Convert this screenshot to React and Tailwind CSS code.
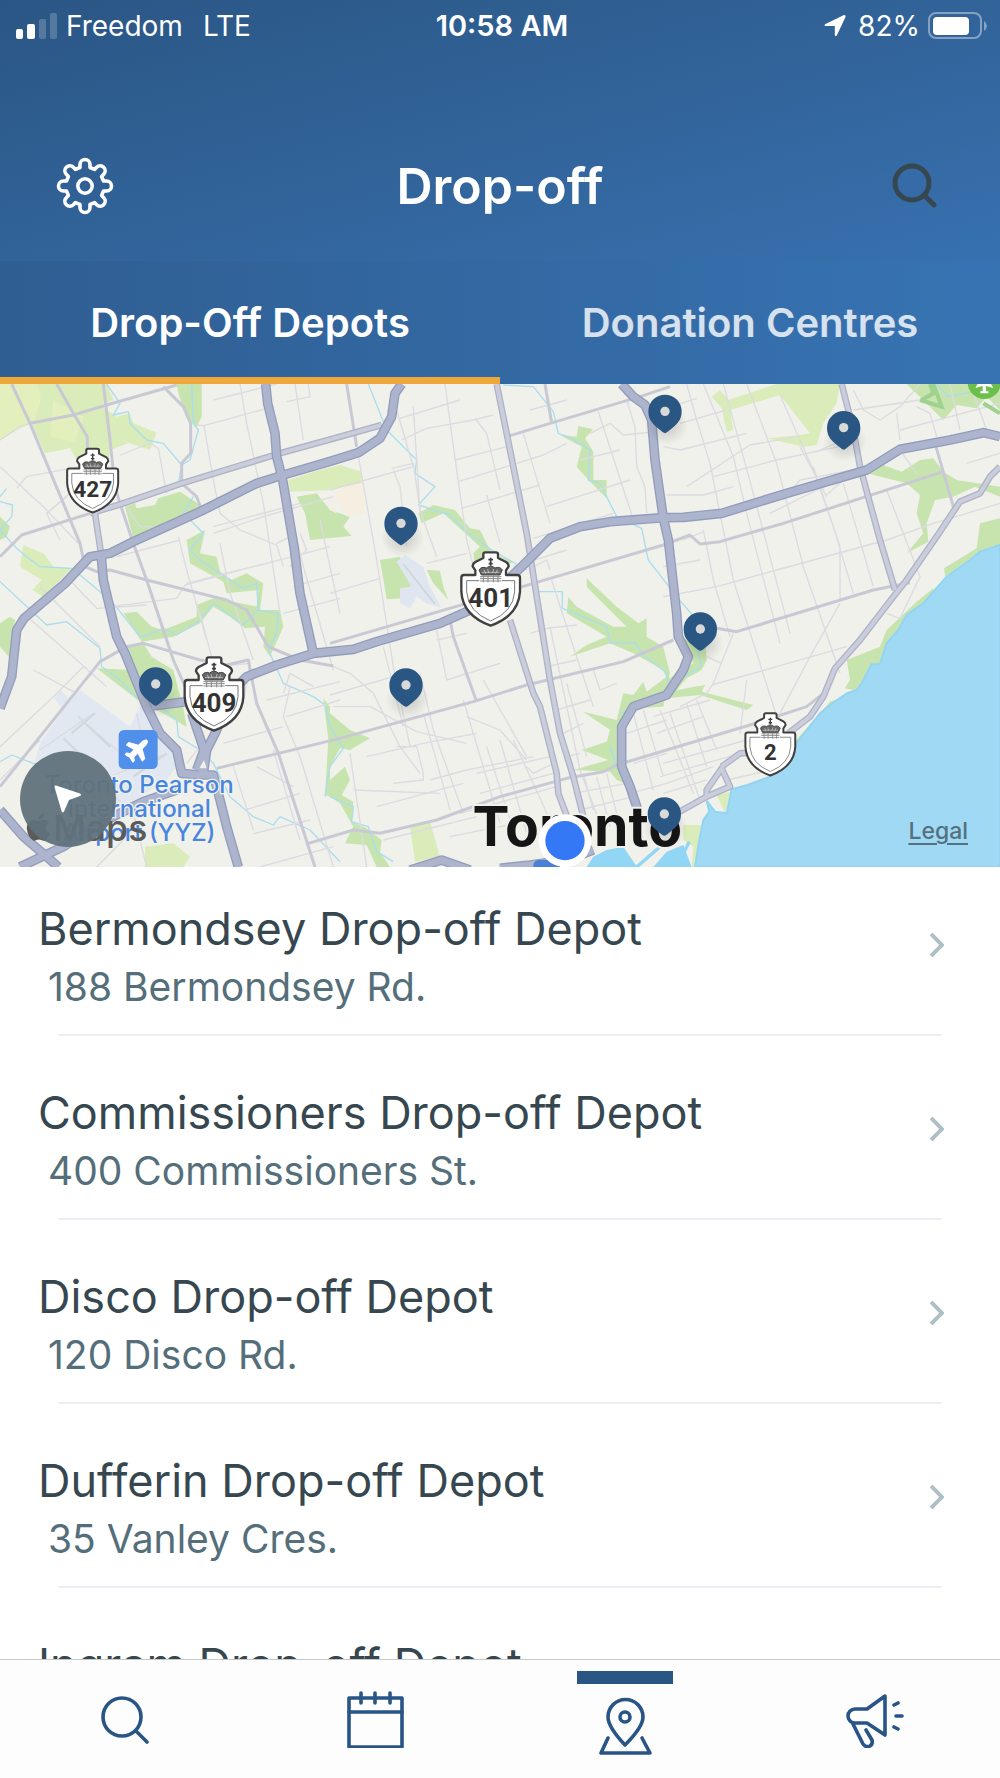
import { FaApple, FaPlane } from "react-icons/fa";

const depots = [
  { name: "Bermondsey Drop-off Depot", address: "188 Bermondsey Rd." },
  { name: "Commissioners Drop-off Depot", address: "400 Commissioners St." },
  { name: "Disco Drop-off Depot", address: "120 Disco Rd." },
  { name: "Dufferin Drop-off Depot", address: "35 Vanley Cres." },
  { name: "Ingram Drop-off Depot" }
];

const pins = [
  [467, 912],
  [1203, 430],
  [1218, 915],
  [1995, 94],
  [2531, 143],
  [2101, 747],
  [1993, 1302]
];

const lightParks = [
  "M0 12H110L122 45L105 125L60 145L30 148L0 182Z",
  "M100 12H320L340 60L300 75L350 110L390 100L400 130L470 158L450 210L360 180L385 190L330 210L325 250L235 245L210 205L135 220L95 130L122 60Z",
  "M70 495L130 520L160 560L215 565L130 650L97 630L125 600L60 560Z",
  "M865 300L960 270L1020 255L1085 275V310L1000 330L870 335Z",
  "M1230 1340L1290 1325L1320 1430L1245 1445Z",
  "M435 1400L520 1390L570 1430L550 1461H435Z",
  "M2135 50L2160 30L2185 60L2330 12H2520L2510 70L2470 130L2450 195L2410 200L2300 175L2400 165L2430 160L2340 45L2190 90L2200 150L2180 155L2165 85Z",
  "M2050 1335H2110L2090 1461H2075L2080 1400L2050 1380Z",
  "M2150 1245L2195 1235L2175 1300Z"
];

const parks = [
  "M530 12H605V110L590 140L560 115L535 40Z",
  "M375 380L405 370L410 385L465 375L475 355L540 335L600 375L590 395L400 475Z",
  "M0 410L30 440L20 470L0 480Z",
  "M0 730L30 710L45 720L30 835L0 800Z",
  "M560 480L615 450L600 520L650 530L660 575L695 600L740 580L790 610L780 690L840 690L850 740L810 830L790 800L795 740L735 745L690 710L640 680L600 730L520 770L425 785L370 700L410 695L455 740L490 750L590 710V675L640 655L700 665L770 680L775 630L680 640L670 605L570 550Z",
  "M380 800L430 790L455 830L520 870L550 985L560 1040L480 995L440 980L290 865L395 870Z",
  "M890 350L950 340L990 390L1050 410L1030 440L1055 468L930 480L915 400Z",
  "M1255 400L1300 375L1365 390L1410 445L1440 450L1475 520L1540 545L1480 580L1425 560L1420 520L1440 500L1330 400L1265 430Z",
  "M1140 540L1200 530L1235 610L1215 655L1160 658Z",
  "M1280 570L1320 572L1330 620L1345 660L1300 610Z",
  "M1680 165L1730 170L1735 138L1780 148L1755 175L1780 215V300L1820 300V355L1770 305L1730 260L1745 200Z",
  "M1760 595L1850 680L1915 730L1940 715V770L1990 800L2010 880L1990 980L1900 985L1865 1040V1160L1900 1220L1850 1200L1830 1175L1720 1170L1825 1140L1745 1110L1820 1085L1830 1050L1750 995L1850 1020L1870 940L1900 945L1930 905L1940 935L2000 890L1990 870L1900 820L1830 790L1710 830L1760 795L1820 770L1700 700L1705 650L1730 680L1840 740H1880L1760 620Z",
  "M990 1000L1050 1050L1110 1075L1050 1110L1020 1105L990 1160Z",
  "M990 1200L1035 1160L1050 1200L1025 1245L1060 1265L1055 1325L1100 1345L1145 1380L1140 1415L1170 1461H1130L1100 1395L1035 1390L1060 1340L1020 1270L990 1250Z",
  "M970 955L990 980V1250L975 1245L985 1080Z",
  "M2050 780L2115 770L2120 840L2105 870L2060 895L2030 930L2115 915L2105 935L2260 975L2240 990L2100 945L2000 955L1985 965L2000 900L2080 850Z",
  "M2600 280L2650 255L2705 275L2760 240L2800 235L2830 275L2870 300L3000 320V350L2925 320L2860 350L2805 360L2780 430L2785 485L2720 520L2770 460L2750 400L2760 345L2720 310Z",
  "M3000 415V500L2910 545L2835 590L2832 565L2930 505L2940 430Z",
  "M2800 625L2750 665L2660 750L2640 800L2540 840L2550 900L2535 925L2580 935L2660 850V800L2800 640Z",
  "M2540 945L2490 965L2380 1090V1110L2480 990Z",
  "M2720 12L2830 120L2870 75L2930 85L2960 50L3000 90V12Z"
];

const streams = [
  "M320 12L360 70L340 105L385 95L390 130L440 180L490 190L545 255L535 310M575 12L580 130L595 150L570 240L545 255",
  "M0 350L20 325M0 365L38 375L35 410L0 450L50 505L80 530L120 560L215 565L270 610L340 670L420 770L440 765L490 745L530 765L595 725L640 670L730 735L775 690L770 610L730 625L600 540L570 510L610 460L550 400L580 350",
  "M775 690L835 700L830 760L805 810L850 910L940 950L975 975L990 1040L1030 1105L990 1160L975 1250",
  "M0 605L140 735L200 725L300 805L305 860L360 900L410 955M470 970L530 1020L535 1070L600 1110L640 1150L690 1250L760 1310L820 1335L840 1310L930 1350L1020 1445",
  "M0 1145L35 1125L100 1150L140 1155",
  "M1105 12L1160 150L1250 240L1245 280L1305 320L1255 375L1350 405L1400 455L1475 510L1580 570M1615 635H1687V685L1820 740L1832 790L1905 788L1930 825L1995 875L2010 920",
  "M1510 15L1600 20L1660 95L1675 160L1715 175L1770 210L1765 300L1800 310L1850 410L1925 445L1945 540L2030 650L2090 720",
  "M990 1250L1060 1280L1055 1325L1105 1340L1130 1415L1180 1445",
  "M2810 12L2845 50L3000 20M2050 890L2105 860L2090 800M1860 1000L1885 990M1850 1160L1830 1100"
];

const localRoads = [
  "M0 180L60 140L90 130M140 400L210 340M0 260L130 380L235 490M50 325L80 290L240 260M170 12L220 100M360 225L450 190L475 205L500 340M365 360L420 440L480 440",
  "M590 135L612 137L640 300L660 400L720 450L830 495L850 560M612 137L820 80M640 60L830 12M720 12L740 130L790 370L840 700M885 12L910 180M925 12L930 50L860 65",
  "M640 440L900 370M350 530L540 480M200 350L140 400L180 480M535 470L560 570L620 780M600 700L640 850M660 490L690 640L760 840M560 610L800 550L990 500M640 460L790 410L1000 350M830 490L890 460M850 700L1020 655",
  "M330 680L530 655L555 615L720 570M200 590L290 685L440 675M70 700L230 840L320 920M120 620L200 700L300 800M0 1100L150 960L250 860M100 870L230 940",
  "M0 1200L120 1080M235 1010L420 1170M190 1075L300 1190M120 1110L280 1000M420 1050L410 1000M290 1200L400 1300L440 1461M330 1190L500 1120M290 1461L400 1350",
  "M890 480L910 560L1000 870M960 420L1020 700M870 560L920 510L900 460M880 620L1020 580M850 940L870 880L940 920M860 1010L1020 960M870 920L850 1010L900 1130L1000 1461",
  "M670 1090L850 1040M700 1160L760 1350M730 970L750 850L700 855M770 1160L880 1220M800 960L1020 905M820 1110L900 1380M735 1290L900 1240M760 1361L930 1320M780 1461L1000 1400M560 1150L600 1100",
  "M1070 200L1130 540L1180 860L1230 1100M990 330L1240 260L1190 90M1205 180L1280 145L1420 120L1480 105M1335 12L1360 200L1400 480L1420 560M1200 115L1380 60M1425 115L1460 160L1500 330M1240 80L1260 400",
  "M1375 305L1630 225L1700 190M1385 385L1620 315M1365 240L1520 200M1570 160L1650 430M1590 90L1700 60M1460 345L1500 490M1180 270L1200 320L1220 500M1175 265L1240 250L1260 390L1310 530M1280 550L1400 520M990 640L1140 595",
  "M1640 380L1890 300M1600 475L1840 400M1540 560L1700 510M1655 600L1700 740L1780 980M1795 95L1900 420M1770 160L1830 130L1870 165L1970 155M1880 60L1905 140L1910 260L1935 320L1940 400M1860 210L1740 240M1650 570L1640 540L1600 560",
  "M1590 760L1640 745L1730 735M1310 780L1400 760M1340 900L1500 850M1000 860L1050 880L1120 940L1150 1000L1200 1100L1260 1180M1150 800L1210 1040M1310 750L1340 900M1260 880L1300 1050L1390 1300M990 945L1180 890M1000 980L1110 980L1250 1055L1400 1090",
  "M1100 1130L1270 1090L1430 1060M1060 1230L1320 1240M1050 1120L1100 1461M1270 1000L1350 1290M1390 960L1500 1330M1400 1010L1500 1050L1580 1140M1190 1100H1250L1270 1180V1200L1180 1210M1450 900L1580 1130M1130 1280L1390 1210M1150 1380L1430 1310",
  "M1460 1100L1540 1350M1500 1080L1580 1360M1540 1080L1650 1320M1430 1180L1650 1130M1290 1200L1400 1170L1600 1130M1440 1240L1660 1180M1380 1300L1670 1220M1350 1370L1550 1330M1580 1160L1600 1180L1660 1150",
  "M1650 740L1740 1170L1800 1330M1700 910L1760 1130M1640 860L1730 840M1670 990L1770 960M1690 1060L1750 1030M1700 1130L1740 1120M1780 870L1800 930L1850 910M1750 1180L1780 1290M1790 1190L1830 1340M1820 1180L1860 1340M1720 1240L1880 1210M1740 1290L1900 1250",
  "M2060 12L2090 120L2130 250L2200 600L2340 1040M2110 12L2200 230L2240 400L2340 790M2170 12L2260 340L2370 760M2240 12L2330 250L2410 560L2520 880M2340 45L2440 270L2500 440L2560 640M2400 200L2480 350M2530 310L2620 620M2440 260L2520 500V660",
  "M1990 200L2040 210L2240 160M2000 345H2110L2200 320M2060 320L2250 195L2390 170M2040 130L2180 90M1980 90L2090 55M2450 215L2530 180L2580 150M2140 290L2330 240L2560 190M2310 400L2450 330L2540 290L2480 345M2350 360L2400 300L2560 270",
  "M1990 650L2150 620L2330 570L2660 480L2800 430L3000 370M2110 450L2140 600L2190 770M2050 480L2110 455M1990 560L2100 540M2200 760L2140 910L2120 940L2040 980M2135 915L2330 860L2540 800M2520 670L2430 830L2340 1000M2240 900L2220 1060M2120 830L2165 850",
  "M2660 330L2760 590L2700 715L2660 700M2560 30L2590 90L2640 120L2700 80L2760 12M2690 100L2700 180M2750 80L2790 100L2810 170M2560 90L2760 60M2700 210L2750 280M2850 12L2880 150M2910 12L2960 150M2700 150L3000 70M2900 250L3000 220",
  "M1960 1010L2130 960M1970 1060L2110 1010M1990 1150L2240 1080M1980 1190L2220 1120M2000 1210L2140 1160M1990 1240L2120 1200M1980 990L2080 1240M2010 1000L2100 1260M2060 970L2120 1160M2090 960L2150 1110M1930 990L1990 1190M1900 1000L1960 1230M1880 1060L2000 1020M1900 1150L2000 1120M1890 1240L2000 1210M2180 1200L2360 1160"
];

const mediumRoads = [
  "M35 12L90 130L240 490L255 560L290 575L330 570L440 600L680 660L740 690L805 800L900 840L1000 858",
  "M90 130L220 105L320 75L530 15",
  "M310 12L330 180L345 320L360 370L400 490L440 600L520 840L560 930",
  "M490 20L550 80L572 130V220L545 250V310L590 350L605 390",
  "M0 1220L300 845L380 800L430 790L600 840L680 855L745 840L770 970L835 1120L945 1461",
  "M650 1165L835 1120L1020 1075L1420 965L1580 915L1870 845L2020 780",
  "M170 12L220 100L262 170V230M0 530L65 465L270 400",
  "M1040 12L1070 200M1635 12L1655 130M1520 170L1650 130L1920 50L2010 20",
  "M990 790L1400 670L1600 610L1990 495L2070 465L2100 492L2160 485L2350 430L2830 275",
  "M1350 720L1360 770L1430 965M925 1390L1060 1350L1140 1360L1310 1320L1500 1250L1700 1195L1810 1175L1850 1155L2000 1110L2250 1035L2420 980L2470 940",
  "M2150 745L2210 755L2620 630L2730 608M2808 200L2860 380"
];

const arterials = [
  "M270 400L355 375L545 310L840 220L1020 170L1145 135M285 400L303 520",
  "M1490 12L1520 160L1580 460L1650 900L1680 1060L1720 1190L1750 1310",
  "M1530 720L1600 940L1620 980L1670 1180L1675 1240L1705 1320",
  "M2525 12L2560 150L2580 260L2640 480L2685 630",
  "M2030 1300L2120 1250L2190 1220L2165 1165L2120 1230V1250M2165 1160L2220 1120L2260 1118M2365 1060L2430 1010L2470 950L2505 865L2580 780L2680 650L2720 600L2810 470L2880 365L2940 340L2970 290L3000 260"
];

const highways = [
  "M0 985L35 890L50 750L72 715L195 610L270 530L330 520L400 485L600 395L770 310L850 285L990 244L1075 218L1140 175L1175 110L1185 40L1205 12",
  "M797 12L803 70L825 160L830 230L848 300L882 500L900 640L940 820",
  "M303 520L310 600L350 770L375 820L440 980L480 1060L530 1110L545 1180L600 1185L640 1185L655 1240L680 1340L715 1461",
  "M610 1180L620 1110L650 1050L700 930L740 890L830 855L940 820L1060 808L1130 785L1320 730L1400 695L1480 640L1560 565L1650 475L1740 440L1830 425L1990 413L2050 412L2165 400L2360 340L2600 270L2700 208L2850 180L2950 158L3000 170",
  "M455 978L560 965M575 1000L612 1110L590 1170",
  "M1865 12L1900 50L1935 75L1955 120L1965 240L1990 415L2005 480L2030 700L2035 770L2065 830L2050 870L2000 945L1900 980L1865 1040V1160L1890 1220L1912 1285",
  "M0 1290L70 1370L140 1430L175 1461M60 1461L190 1400L320 1320L430 1265L530 1230",
  "M1230 1470L1325 1440L1410 1470M1500 1465L1590 1455L1700 1440L1780 1410"
];

// One rounded tooth every 45 degrees
const gearPath =
  Array.from({ length: 8 }, (_, i) => {
    const angle = (i * Math.PI) / 4;
    const at = (x, y) =>
      `${(x * Math.cos(angle) - y * Math.sin(angle)).toFixed(2)} ${(x * Math.sin(angle) + y * Math.cos(angle)).toFixed(2)}`;
    return `${i ? "L" : "M"}${at(-5, -18.5)}L${at(-5, -21.5)}A5 5 0 0 1 ${at(5, -21.5)}L${at(5, -18.5)}`;
  }).join("") + "Z";

function StatusBar() {
  return (
    <div className="grid grid-cols-3 items-center h-13 pl-4 pr-3 text-[28px] leading-8">
      <div className="flex items-center gap-2">
        <svg width="42" height="27" viewBox="0 0 42 27" fill="currentColor" aria-hidden="true">
          <rect x="0" y="16" width="7" height="10" rx="2" />
          <rect x="11" y="11" width="8" height="15" rx="2" />
          <rect x="23" y="6" width="7" height="20" rx="2" opacity=".2" />
          <rect x="34" y="0" width="7" height="26" rx="2" opacity=".2" />
        </svg>
        <span>Freedom</span>
        <span className="ml-3">LTE</span>
      </div>
      <div className="text-center text-[29px] font-semibold">10:58 AM</div>
      <div className="flex items-center justify-end gap-2">
        <svg width="22" height="22" viewBox="0 0 22 22" fill="currentColor" className="mr-1" aria-hidden="true">
          <path d="M20 0Q22 0 21.500 2L13 20Q11.500 22.500 10.800 20V11H2Q-1 10.500 1.500 9Z" />
        </svg>
        <span>82%</span>
        <svg width="60" height="28" viewBox="0 0 60 28" fill="none" aria-hidden="true">
          <rect x="1" y="1" width="52" height="25" rx="7" stroke="#fff" strokeOpacity=".4" strokeWidth="2" />
          <rect x="5" y="5" width="36" height="18" rx="4" fill="#fff" />
          <path d="M56 9Q59 11 59 14Q59 17 56 19Z" fill="#fff" fillOpacity=".4" />
        </svg>
      </div>
    </div>
  );
}

function Shield({ x, y, scale = 1, number }) {
  return (
    <g transform={`translate(${x} ${y}) scale(${scale})`}>
      <path
        d="M-16 -110H16Q22 -110 22 -104V-93L46 -81Q54 -76 54 -68L46 -56V-42H80Q88 -42 88 -34V8Q84 80 0 110Q-84 80 -88 8V-34Q-88 -42 -80 -42H-46V-56L-54 -68Q-54 -76 -46 -81L-22 -93V-104Q-22 -110 -16 -110Z"
        fill="#fff"
        stroke="#404040"
        strokeWidth="7"
        strokeLinejoin="round"
      />
      <path d="M-34 -25H-72V8Q-68 68 0 96Q68 68 72 8V-25H34" fill="none" stroke="#777" strokeWidth="3" />
      <path d="M0 -94V-70M-7 -88H7M-6 -76H6" stroke="#404040" strokeWidth="5" />
      <path
        d="M-28 -42L-35 -57Q-28 -69 -13 -63Q0 -74 13 -63Q28 -69 35 -57L28 -42Z"
        fill="#666"
        stroke="#444"
        strokeWidth="3"
      />
      <path d="M-20 -58L-15 -46M-9 -60L-6 -48M9 -60L6 -48M20 -58L15 -46M-27 -50H27" stroke="#ddd" strokeWidth="2" />
      <path d="M-32 -37H32M-32 -31H32M-32 -24H32M-22 -40V-20M-8 -40V-20M8 -40V-20M22 -40V-20" stroke="#888" strokeWidth="3" />
      <text y="55" textAnchor="middle" fontSize="78" className="font-['Roboto',sans-serif] font-bold" fill="#333">
        {number}
      </text>
    </g>
  );
}

function RoadGroup({ paths, color, width }) {
  return (
    <g fill="none" stroke={color} strokeWidth={width} strokeLinejoin="round">
      {paths.map((d, idx) => (
        <path key={idx} d={d} />
      ))}
    </g>
  );
}

function DepotMap() {
  return (
    <section className="relative h-[483px] shrink-0 overflow-hidden bg-[#f0f1eb]" aria-label="Map">
      <svg className="block w-full h-full" viewBox="0 12 3000 1449" preserveAspectRatio="xMidYMid slice">
        <defs>
          <radialGradient id="pinShadow">
            <stop offset="0" stopColor="#000" stopOpacity=".18" />
            <stop offset="1" stopColor="#000" stopOpacity="0" />
          </radialGradient>
        </defs>
        <g fill="#daecb9">
          {lightParks.map((d, idx) => (
            <path key={idx} d={d} />
          ))}
        </g>
        <g fill="#c8e4ae">
          {parks.map((d, idx) => (
            <path key={idx} d={d} />
          ))}
        </g>
        <path d="M0 12H110L122 45L105 125L60 145L0 182ZM160 60L250 110L225 185L150 170Z" fill="#e3efbd" />
        <path d="M1000 325L1088 310L1097 400L1040 410ZM990 345L1010 400L990 390Z" fill="#f6eee0" />
        {/* Airports */}
        <path
          d="M240 930L390 1040L420 980L440 990L520 1110L530 1160L500 1200L420 1250L350 1320L290 1300L100 1160L120 1090L190 990L160 950L180 930L210 960Z"
          fill="#e2e8f1"
        />
        <path d="M1190 545L1215 525L1270 560L1285 610L1325 685L1280 670L1250 650L1230 685L1200 670V625L1235 620Z" fill="#e0e6f0" />
        <path d="M1210 552L1305 672M235 1010L330 1100M190 1075L280 1160M215 1060L285 1000M400 1190L500 1120" fill="none" stroke="#ced6de" strokeWidth="6" />
        {/* Lake Ontario */}
        <path
          d="M3000 495L2940 515L2910 540L2840 590L2800 635L2770 670L2720 705L2695 750L2660 790L2640 853H2615L2585 910L2570 930L2540 940L2490 975L2460 1000L2385 1095L2380 1130L2310 1190L2242 1215L2195 1228L2180 1300L2145 1295L2120 1262L2128 1295L2110 1320L2098 1380L2085 1461H3000Z"
          fill="#9fd9f4"
          stroke="#93d4f4"
          strokeWidth="6"
        />
        <path d="M1760 1461L1780 1430L1820 1410L1870 1400L1890 1430L1912 1461ZM1960 1461L2000 1415L2050 1395L2075 1461Z" fill="#92d6f5" />
        <path d="M2068 1385L2040 1440M1980 1400L1910 1461" stroke="#92d6f5" strokeWidth="10" />
        <RoadGroup paths={streams} color="#aaddee" width={4} />
        <RoadGroup paths={localRoads} color="#dbdbe1" width={4} />
        <RoadGroup paths={mediumRoads} color="#c8c9d4" width={9} />
        <RoadGroup paths={arterials} color="#b0b3c6" width={20} />
        <RoadGroup paths={arterials} color="#cacddc" width={12} />
        <RoadGroup paths={highways} color="#939dbb" width={29} />
        <RoadGroup paths={highways} color="#adb4cd" width={21} />
        <path d="M598 1165L612 1140L620 1165Z" fill="#f0f1eb" />

        <Shield x={278} y={302} scale={0.87} number="427" />
        <Shield x={642} y={942} number="409" />
        <Shield x={1472} y={627} number="401" />
        <Shield x={2311} y={1093} scale={0.85} number="2" />

        <path d="M2765 60L2800 40L2790 12M2800 12L2825 80L2760 60M2950 70L3000 100" fill="none" stroke="#9fd18f" strokeWidth="12" />
        <circle cx="2953" cy="7" r="50" fill="#6cbf4b" />
        <path d="M2926 24L2953 -24L2980 24L2958 18V34H2965V40H2941V34H2948V18Z" fill="#fff" />

        {/* Airport label */}
        <rect x="356" y="1050" width="117" height="117" rx="16" fill="#5190ea" />
        <g transform="rotate(-45 414 1108)">
          <FaPlane x="374" y="1068" size={80} color="#fff" />
        </g>
        <g
          textAnchor="middle"
          fontSize="72"
          fill="#4885de"
          stroke="#f0f1eb"
          strokeWidth="8"
          paintOrder="stroke"
          className="font-['Inter',sans-serif] font-medium"
        >
          <text x="417" y="1238">Toronto Pearson</text>
          <text x="417" y="1310">International</text>
          <text x="417" y="1382">Airport (YYZ)</text>
        </g>
        <g fill="#5d5b5a">
          <FaApple x="68" y="1294" size={94} color="#5d5b5a" />
          <text x="160" y="1382" fontSize="107" className="font-['Inter',sans-serif] font-medium">Maps</text>
        </g>

        <text
          x="1732"
          y="1398"
          textAnchor="middle"
          fontSize="166"
          fill="#151515"
          stroke="#f0f1eb"
          strokeWidth="12"
          paintOrder="stroke"
          className="font-['Inter',sans-serif] font-bold"
        >
          Toronto
        </text>
        <path d="M1600 1461V1455Q1602 1440 1620 1440H1680V1461Z" fill="#4a7fd6" />
        <circle cx="1695" cy="1382" r="79" fill="#fff" />
        <circle cx="1695" cy="1382" r="59" fill="#3478f6" />

        {pins.map(([x, y]) => (
          <g key={`${x}-${y}`} transform={`translate(${x} ${y})`}>
            <ellipse cx="4" cy="42" rx="66" ry="60" fill="url(#pinShadow)" />
            <path
              d="M0 -50A50 50 0 0 1 50 0C50 28 36 40 6 63Q0 68 -6 63C-36 40 -50 28 -50 0A50 50 0 0 1 0 -50Z"
              fill="#2a5684"
            />
            <circle r="14" fill="#d9dad8" />
          </g>
        ))}
      </svg>
      <button
        type="button"
        aria-label="My location"
        className="absolute left-5 bottom-5 size-24 rounded-full bg-[#60727c]/95 flex items-center justify-center"
      >
        <svg width="28" height="28" viewBox="0 0 28 28" fill="#fff" aria-hidden="true">
          <path d="M2 0.500L26 8.500Q28 10 26 11L15 15L10 26.500Q8.500 28.500 7.500 26L0.500 2Q0.500 0 2 0.500Z" />
        </svg>
      </button>
      <a href="#legal" className="absolute right-8 bottom-5 text-[23px] leading-8 font-medium text-[#55707f] underline underline-offset-4 decoration-2">
        Legal
      </a>
    </section>
  );
}

const navItems = [
  {
    label: "Search",
    icon: (
      <>
        <circle cx="26" cy="27" r="19" />
        <path d="M40 41L51 52" />
      </>
    )
  },
  {
    label: "Calendar",
    icon: (
      <>
        <rect x="3" y="8" width="53" height="49" />
        <path d="M3 22H56M15 3V13M29 3V13M44 3V13" />
      </>
    )
  },
  {
    label: "Drop-off",
    active: true,
    icon: (
      <>
        <path d="M29 48Q12 30 12 20A17 17 0 0 1 47 20Q47 30 29 48Z" />
        <circle cx="29" cy="20" r="5" />
        <path d="M12 41L5 56H54L46 41" />
      </>
    )
  },
  {
    label: "Announcements",
    icon: (
      <>
        <path d="M21 19H9A7 7 0 0 0 9 33H21L39 45V6ZM7 34L17 54Q20 58 24 56Q27 54 26 50L20 40M48 15L52 13M50 26H56M48 37L52 39" />
      </>
    )
  }
];

export default function App() {
  return (
    <div className="flex flex-col h-screen overflow-hidden bg-white font-['Inter',sans-serif]">
      <header className="shrink-0 text-white bg-[linear-gradient(165deg,#2a5684_0%,#33669e_50%,#3874b5_90%)]">
        <StatusBar />
        <div className="flex items-center justify-between h-[209px] px-14 pt-[59px]">
          <button type="button" aria-label="Settings" className="w-[58px] h-[58px]">
            <svg className="w-full h-full" viewBox="-29 -29 58 58" fill="none" stroke="currentColor" strokeWidth="3.6" strokeLinejoin="round" aria-hidden="true">
              <path d={gearPath} />
              <circle r="7.200" />
            </svg>
          </button>
          <h1 className="text-[50px] leading-15 font-semibold">Drop-off</h1>
          <button type="button" aria-label="Search" className="w-[58px] h-[58px] flex items-center justify-center text-[#37474f]">
            <svg width="46" height="46" viewBox="0 0 46 46" fill="none" stroke="currentColor" strokeWidth="5" strokeLinecap="round" aria-hidden="true">
              <circle cx="20" cy="20" r="17" />
              <path d="M32 32L42 42" />
            </svg>
          </button>
        </div>
        <div role="tablist" className="grid grid-cols-2 h-[123px] text-[40px] font-semibold bg-linear-to-r from-[#2f5e92] to-[#3773b3]">
          <button type="button" role="tab" aria-selected="true" className="pt-2 border-b-[7px] border-[#f0a73a]">
            Drop-Off Depots
          </button>
          <button type="button" role="tab" aria-selected="false" className="pt-2 border-b-[7px] border-transparent text-white/80">
            Donation Centres
          </button>
        </div>
      </header>

      <DepotMap />

      <main className="flex-1 min-h-0 overflow-y-auto [scrollbar-width:none]">
        <ul>
          {depots.map((depot) => (
            <li key={depot.name}>
              <a href="#depot" className="flex items-start justify-between h-[167px] pt-8 pl-[38px] pr-14">
                <span className="flex flex-col">
                  <span className="text-[45px] leading-15 text-[#37474f]">{depot.name}</span>
                  {depot.address && <span className="pl-[10px] text-[39px] leading-14 text-[#546e7a]">{depot.address}</span>}
                </span>
                <svg width="14" height="24" viewBox="0 0 14 24" fill="none" stroke="#b0bec5" strokeWidth="4" className="mt-[34px]" aria-hidden="true">
                  <path d="M1 1L12 12L1 23" />
                </svg>
              </a>
              <div className="mx-[58px] mb-[15px] h-[2px] bg-[#edeef3]" />
            </li>
          ))}
        </ul>
      </main>

      <nav className="shrink-0 grid grid-cols-4 h-[119px] border-t border-[#c8c8c8] bg-[#fdfdfd]">
        {navItems.map((item) => (
          <div key={item.label} className="flex items-center justify-center">
            <button type="button" aria-label={item.label} className="flex flex-col size-24">
              {item.active && <span className="h-[13px] w-full bg-[#2a5684]" />}
              <span className="flex flex-1 items-center justify-center">
                <svg width="58" height="58" viewBox="0 0 58 58" fill="none" stroke="#285486" strokeWidth="3.6" strokeLinecap="round" strokeLinejoin="round" aria-hidden="true">
                  {item.icon}
                </svg>
              </span>
            </button>
          </div>
        ))}
      </nav>
    </div>
  );
}
